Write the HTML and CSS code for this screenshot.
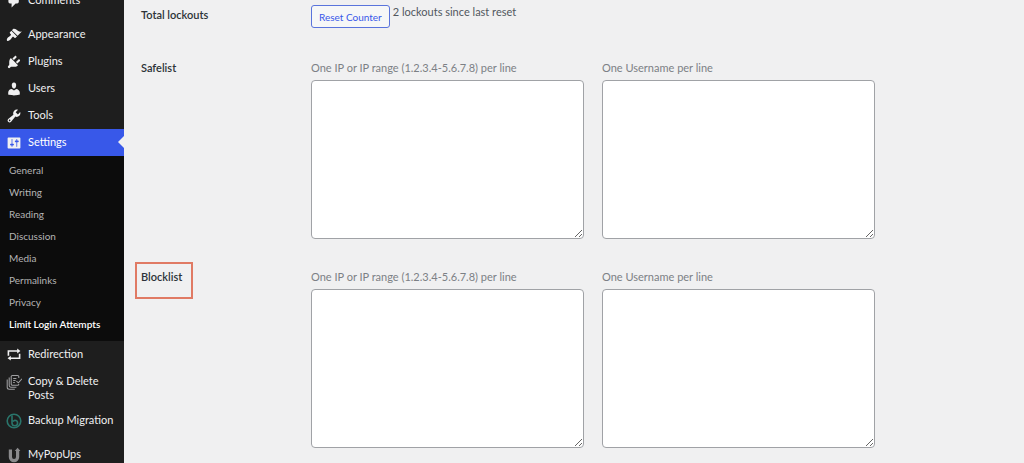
FILE: index.html
```html
<!DOCTYPE html>
<html lang="en">
<head>
  <meta charset="UTF-8">
  <meta name="viewport" content="width=device-width, initial-scale=1">
  <title>Limit Login Attempts</title>
  <link rel="stylesheet" href="styles.css">
</head>
<body>

  <!-- Admin menu -->
  <nav class="admin-menu">
    <ul class="menu">
      <li>
        <a class="menu-link" href="#">
          <svg class="icon" viewBox="0 0 20 20" aria-hidden="true"><path d="M5 2h9c1.1 0 2 .9 2 2v7c0 1.1-.9 2-2 2h-2l-5 5v-5H5c-1.1 0-2-.9-2-2V4c0-1.1.9-2 2-2z"/></svg>
          <span>Comments</span>
        </a>
      </li>
      <li class="separator"></li>
      <li>
        <a class="menu-link" href="#">
          <svg class="icon" viewBox="0 0 20 20" aria-hidden="true"><path d="M14.48 11.06L7.41 3.99l1.5-1.5c.5-.56 2.3-.47 3.51.32 1.21.8 1.43 1.28 2.91 2.1 1.18.64 2.45 1.26 4.45.85zm-.71.71L6.7 4.7 4.93 6.47c-.39.39-.39 1.02 0 1.41l1.06 1.06c.39.39.39 1.03 0 1.42-.6.6-1.43 1.11-2.21 1.69-.35.26-.7.53-1.01.84C1.43 14.23.4 16.08 1.4 17.07c.99 1 2.84-.03 4.18-1.36.31-.31.58-.66.85-1.02.57-.78 1.08-1.61 1.69-2.21.39-.39 1.02-.39 1.41 0l1.06 1.06c.39.39 1.02.39 1.41 0z"/></svg>
          <span>Appearance</span>
        </a>
      </li>
      <li>
        <a class="menu-link" href="#">
          <svg class="icon" viewBox="0 0 20 20" aria-hidden="true"><path d="M13.11 4.36L9.87 7.6 8 5.73l3.24-3.24c.35-.34 1.05-.2 1.56.32.52.51.66 1.21.31 1.55zm-8 1.77l.91-1.12 9.01 9.01-1.19.84c-.71.71-2.63 1.16-3.82 1.16H6.14L4.9 17.26c-.59.59-1.54.59-2.12 0-.59-.58-.59-1.53 0-2.12l1.24-1.24v-3.88c0-1.13.4-3.19 1.09-3.89zm7.26 3.97l3.24-3.24c.34-.35 1.04-.21 1.55.31.52.51.66 1.21.31 1.55l-3.24 3.25z"/></svg>
          <span>Plugins</span>
        </a>
      </li>
      <li>
        <a class="menu-link" href="#">
          <svg class="icon" viewBox="0 0 20 20" aria-hidden="true"><path d="M10 9.25c-2.27 0-2.73-3.44-2.73-3.44C7 4.02 7.82 2 9.97 2c2.16 0 2.98 2.02 2.71 3.81 0 0-.41 3.44-2.68 3.44zm0 2.57L12.72 10c2.39 0 4.52 2.33 4.52 4.53v2.49s-3.65 1.13-7.24 1.13c-3.65 0-7.24-1.13-7.24-1.13v-2.49c0-2.25 1.94-4.48 4.47-4.48z"/></svg>
          <span>Users</span>
        </a>
      </li>
      <li>
        <a class="menu-link" href="#">
          <svg class="icon" viewBox="0 0 20 20" aria-hidden="true"><path d="M16.68 9.77c-1.34 1.34-3.3 1.67-4.95.99l-5.41 6.52c-.99.99-2.59.99-3.58 0s-.99-2.59 0-3.57l6.52-5.42c-.68-1.65-.35-3.61.99-4.95 1.28-1.28 3.12-1.62 4.72-1.06l-2.89 2.89 2.82 2.82 2.86-2.87c.53 1.58.18 3.39-1.08 4.65zM3.81 16.21c.4.39 1.04.39 1.43 0 .4-.4.4-1.04 0-1.43-.39-.4-1.03-.4-1.43 0-.39.39-.39 1.03 0 1.43z"/></svg>
          <span>Tools</span>
        </a>
      </li>
      <li>
        <a class="menu-link current" href="#">
          <svg class="icon" viewBox="0 0 20 20" aria-hidden="true"><path d="M18 16V4c0-.55-.45-1-1-1H3c-.55 0-1 .45-1 1v12c0 .55.45 1 1 1h14c.55 0 1-.45 1-1zM8 11h1c.55 0 1 .45 1 1s-.45 1-1 1H8v1.5c0 .28-.22.5-.5.5s-.5-.22-.5-.5V13H6c-.55 0-1-.45-1-1s.45-1 1-1h1V5.500c0-.28.22-.5.5-.5s.5.22.5.5V11zm5-2h-1c-.55 0-1-.45-1-1s.45-1 1-1h1V5.500c0-.28.22-.5.5-.5s.5.22.5.5V7h1c.55 0 1 .45 1 1s-.45 1-1 1h-1v5.500c0 .28-.22.5-.5.5s-.5-.22-.5-.5V9z"/></svg>
          <span>Settings</span>
        </a>
        <ul class="submenu">
          <li><a href="#">General</a></li>
          <li><a href="#">Writing</a></li>
          <li><a href="#">Reading</a></li>
          <li><a href="#">Discussion</a></li>
          <li><a href="#">Media</a></li>
          <li><a href="#">Permalinks</a></li>
          <li><a href="#">Privacy</a></li>
          <li><a class="active" href="#">Limit Login Attempts</a></li>
        </ul>
      </li>
      <li>
        <a class="menu-link" href="#">
          <svg class="icon" viewBox="0 0 20 20" aria-hidden="true"><path d="M4 6v5H2V4h12V2l4 3-4 3V6zm12 7V8.500h2V15H6v2l-4-3 4-3v2z"/></svg>
          <span>Redirection</span>
        </a>
      </li>
      <li>
        <a class="menu-link" href="#">
          <svg class="icon line" viewBox="0 0 20 20" aria-hidden="true"><path d="M16 5V3.500A1.500 1.500 0 0 0 14.500 2H8a1.500 1.500 0 0 0-1.500 1.500v9A1.500 1.500 0 0 0 8 14h6.500a1.500 1.500 0 0 0 1.500-1.500M4 4.500v10A2 2 0 0 0 6 16.500h7M1.500 7v9.500A2.500 2.500 0 0 0 4 19h7M9 5.500h4M9 8h3M9 10.500h2M13 9l2.500 2L20 6"/></svg>
          <span>Copy &amp; Delete Posts</span>
        </a>
      </li>
      <li>
        <a class="menu-link" href="#">
          <svg class="icon backup" viewBox="0 0 20 20" aria-hidden="true"><circle cx="10" cy="10" r="8.500"/><path d="M7.500 3v9.500a3.500 3.500 0 1 0 3.500-3.500L8.500 10.500"/></svg>
          <span>Backup Migration</span>
        </a>
      </li>
      <li class="separator"></li>
      <li>
        <a class="menu-link" href="#">
          <svg class="icon popups" viewBox="0 0 20 20" aria-hidden="true"><path d="M5.500 3v9.500a4.500 4.500 0 0 0 9 0V4"/><path class="tip" d="M11 5l3.500-4L18 5z"/></svg>
          <span>MyPopUps</span>
        </a>
      </li>
    </ul>
  </nav>

  <!-- Settings form -->
  <main class="content">
    <form class="form">
      <div class="row">
        <div class="row-title">Total lockouts</div>
        <div class="counter">
          <button class="button" type="button">Reset Counter</button>
          <span>2 lockouts since last reset</span>
        </div>
      </div>

      <div class="row">
        <div class="row-title">Safelist</div>
        <div class="fields">
          <div class="field">
            <label for="safe-ips">One IP or IP range (1.2.3.4-5.6.7.8) per line</label>
            <textarea id="safe-ips"></textarea>
          </div>
          <div class="field">
            <label for="safe-users">One Username per line</label>
            <textarea id="safe-users"></textarea>
          </div>
        </div>
      </div>

      <div class="row">
        <div class="row-title"><span class="marked">Blocklist</span></div>
        <div class="fields">
          <div class="field">
            <label for="block-ips">One IP or IP range (1.2.3.4-5.6.7.8) per line</label>
            <textarea id="block-ips"></textarea>
          </div>
          <div class="field">
            <label for="block-users">One Username per line</label>
            <textarea id="block-users"></textarea>
          </div>
        </div>
      </div>
    </form>
  </main>

</body>
</html>
```

FILE: styles.css
```css
* {
  box-sizing: border-box;
}

body {
  margin: 0;
  display: flex;
  height: 100vh;
  overflow: hidden;
  background: #f0f0f1;
  color: #50575e;
  font-family: "Segoe UI", Lato, sans-serif;
  font-size: 11px;
  line-height: 14px;
}

a {
  color: inherit;
  text-decoration: none;
}

ul {
  list-style: none;
  margin: 0;
  padding: 0;
}

/* Admin menu */
.admin-menu {
  flex: 0 0 124px;
  background: #1e1e1e;
  color: #f0f0f1;
  overflow: hidden;
}

/* the menu is scrolled past its first items */
.menu {
  margin-top: -13px;
}

.menu-link {
  display: flex;
  align-items: flex-start;
  gap: 6px;
  min-height: 27px;
  padding: 6px 6px 5px;
  position: relative;
}

.icon {
  flex: none;
  width: 16px;
  height: 16px;
  fill: #f0f0f1;
}

.separator {
  height: 7px;
}

.current {
  background: #3858e9;
  color: #fff;
}

.current::after {
  content: "";
  position: absolute;
  right: 0;
  top: 7px;
  border: 6px solid transparent;
  border-right-color: #f0f0f1;
  border-left: 0;
}

.submenu {
  padding: 3px 0 6px;
  background: #0c0c0c;
  color: #b4b4b5;
  font-size: 10px;
}

.submenu a {
  display: block;
  padding: 4px 9px;
}

.submenu .active {
  color: #fff;
  font-weight: 600;
}

.line {
  fill: none;
  stroke: #a0a0a2;
  stroke-width: 1.3;
}

.backup {
  fill: none;
  stroke: #2a756b;
  stroke-width: 2;
}

.popups {
  fill: none;
  stroke: #8a8a8c;
  stroke-width: 4;
}

.popups .tip {
  fill: #8a8a8c;
  stroke: none;
}

/* Settings form */
.content {
  flex: 1;
  min-width: 0;
  padding: 5px 17px 0;
}

.form {
  display: flex;
  flex-direction: column;
  gap: 31px;
}

.row {
  display: grid;
  grid-template-columns: 170px 1fr;
}

.row-title {
  color: #2c3338;
  font-weight: 600;
}

.row:first-child .row-title {
  padding-top: 3px;
}

.counter {
  display: flex;
  align-items: flex-start;
  gap: 3px;
  min-height: 25px;
}

.button {
  height: 23px;
  padding: 0 7px;
  border: 1px solid #5a74dc;
  border-radius: 3px;
  background: #f6f7f7;
  color: #3858e9;
  font: inherit;
  font-size: 10px;
}

.fields {
  display: flex;
  gap: 18px;
}

.field {
  flex: 0 1 273px;
  display: flex;
  flex-direction: column;
  gap: 5px;
  color: #7c8085;
}

textarea {
  width: 100%;
  height: 159px;
  padding: 4px 6px;
  border: 1px solid #a0a2a6;
  border-radius: 4px;
  background: #fff;
  font: inherit;
}

/* outline around the highlighted setting */
.marked {
  display: inline-block;
  position: relative;
}

.marked::before {
  content: "";
  position: absolute;
  inset: -8px -11px -15px -6px;
  border: 2px solid #e07a64;
}
```
